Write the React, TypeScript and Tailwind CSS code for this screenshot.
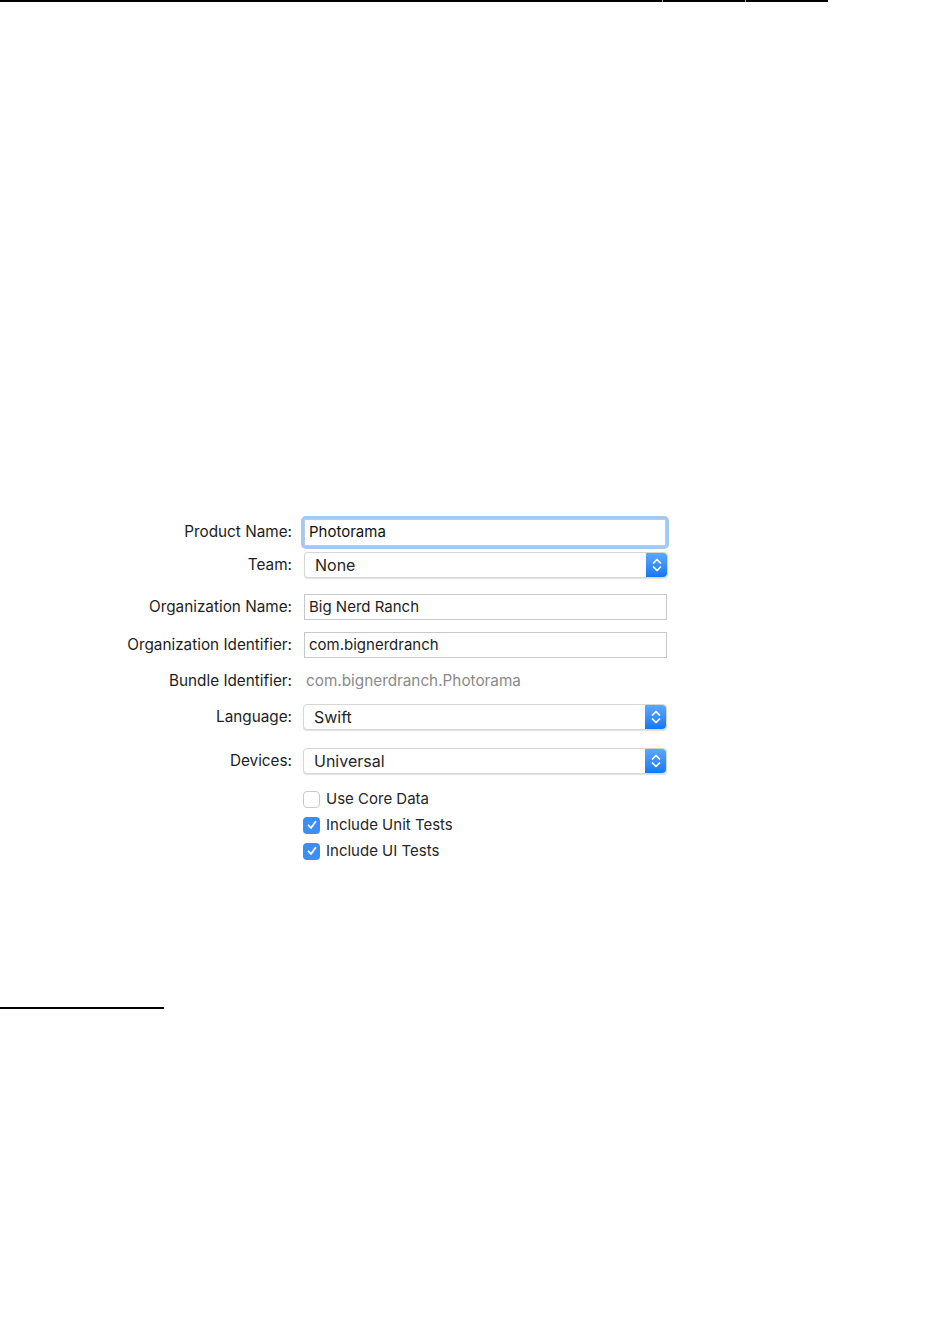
import React from "react";

const FONT = { fontFamily: 'Inter, "Noto Sans", "Liberation Sans", sans-serif' };

function Label({ children }: { children: React.ReactNode }) {
  return (
    <div className="w-[292px] shrink-0 text-right text-[15.3px] text-[#1d1d1d]">
      {children}
    </div>
  );
}

function Stepper() {
  return (
    <div className="flex h-full w-[21px] items-center justify-center rounded-r-[4px] bg-gradient-to-b from-[#5aa8ff] to-[#1676f3]">
      <svg width="12" height="20" viewBox="0 0 12 20" fill="none">
        <path d="M2.5 8 L6 4.5 L9.5 8" stroke="white" strokeWidth="1.7" strokeLinecap="round" strokeLinejoin="round" />
        <path d="M2.5 12 L6 15.5 L9.5 12" stroke="white" strokeWidth="1.7" strokeLinecap="round" strokeLinejoin="round" />
      </svg>
    </div>
  );
}

function Popup({ value }: { value: string }) {
  return (
    <div className="flex h-[26px] w-[364px] items-center rounded-[4px] border border-[#d6d6d6] bg-white shadow-[0_1px_1px_rgba(0,0,0,0.12)]">
      <div className="flex-1 pl-[10px] text-[16px] text-[#262626]">{value}</div>
      <Stepper />
    </div>
  );
}

function Field({ value }: { value: string }) {
  return (
    <div className="flex h-[26px] w-[363px] items-center border border-[#c8c8c8] bg-white pl-[4px] text-[15px] text-[#1d1d1d]">
      {value}
    </div>
  );
}

function Check({ checked, label }: { checked: boolean; label: string }) {
  return (
    <div className="flex h-[26px] items-center gap-[6px]">
      {checked ? (
        <div className="flex h-[17px] w-[17px] items-center justify-center rounded-[4px] bg-[#3a8ff7]">
          <svg width="12" height="12" viewBox="0 0 12 12" fill="none">
            <path d="M2.5 6.3 L5 9 L9.5 2.8" stroke="white" strokeWidth="1.8" strokeLinecap="round" strokeLinejoin="round" />
          </svg>
        </div>
      ) : (
        <div className="h-[17px] w-[17px] rounded-[4px] border border-[#c9c9c9] bg-white" />
      )}
      <span className="text-[15px] text-[#262626]">{label}</span>
    </div>
  );
}

export default function App() {
  return (
    <div className="relative h-[1339px] w-[935px] bg-white" style={FONT}>
      {/* top rule */}
      <div className="flex h-[2px] w-[828px]">
        <div className="w-[662px] bg-black" />
        <div className="w-[1px] bg-[#aaaaaa]" />
        <div className="w-[82px] bg-black" />
        <div className="w-[1px] bg-[#aaaaaa]" />
        <div className="flex-1 bg-black" />
      </div>

      <div className="flex flex-col pt-[512px]">
        {/* Product Name */}
        <div className="flex h-[36px] items-center gap-[9px]">
          <Label>Product Name:</Label>
          <div className="rounded-[5px] bg-[#a3c8f5] p-[3px]">
            <div className="flex h-[27px] w-[362px] items-center border border-[#b7cbe6] bg-white pl-[4px] text-[15px] text-[#111]">
              Photorama
            </div>
          </div>
        </div>

        {/* Team */}
        <div className="mt-[2px] flex h-[26px] items-center gap-[12px]">
          <Label>Team:</Label>
          <Popup value="None" />
        </div>

        <div className="mt-[16px] flex h-[26px] items-center gap-[12px]">
          <Label>Organization Name:</Label>
          <Field value="Big Nerd Ranch" />
        </div>

        <div className="mt-[12px] flex h-[26px] items-center gap-[12px]">
          <Label>Organization Identifier:</Label>
          <Field value="com.bignerdranch" />
        </div>

        <div className="mt-[10px] flex h-[26px] items-center gap-[14px]">
          <Label>Bundle Identifier:</Label>
          <div className="text-[15.3px] text-[#8a8a8a]">com.bignerdranch.Photorama</div>
        </div>

        <div className="mt-[10px] flex h-[26px] items-center gap-[11px]">
          <Label>Language:</Label>
          <Popup value="Swift" />
        </div>

        <div className="mt-[18px] flex h-[26px] items-center gap-[11px]">
          <Label>Devices:</Label>
          <Popup value="Universal" />
        </div>

        <div className="mt-[12px] flex flex-col pl-[303px]">
          <Check checked={false} label="Use Core Data" />
          <Check checked={true} label="Include Unit Tests" />
          <Check checked={true} label="Include UI Tests" />
        </div>

        {/* footnote rule */}
        <div className="mt-[143px] h-[2px] w-[164px] bg-black" />
      </div>
    </div>
  );
}
